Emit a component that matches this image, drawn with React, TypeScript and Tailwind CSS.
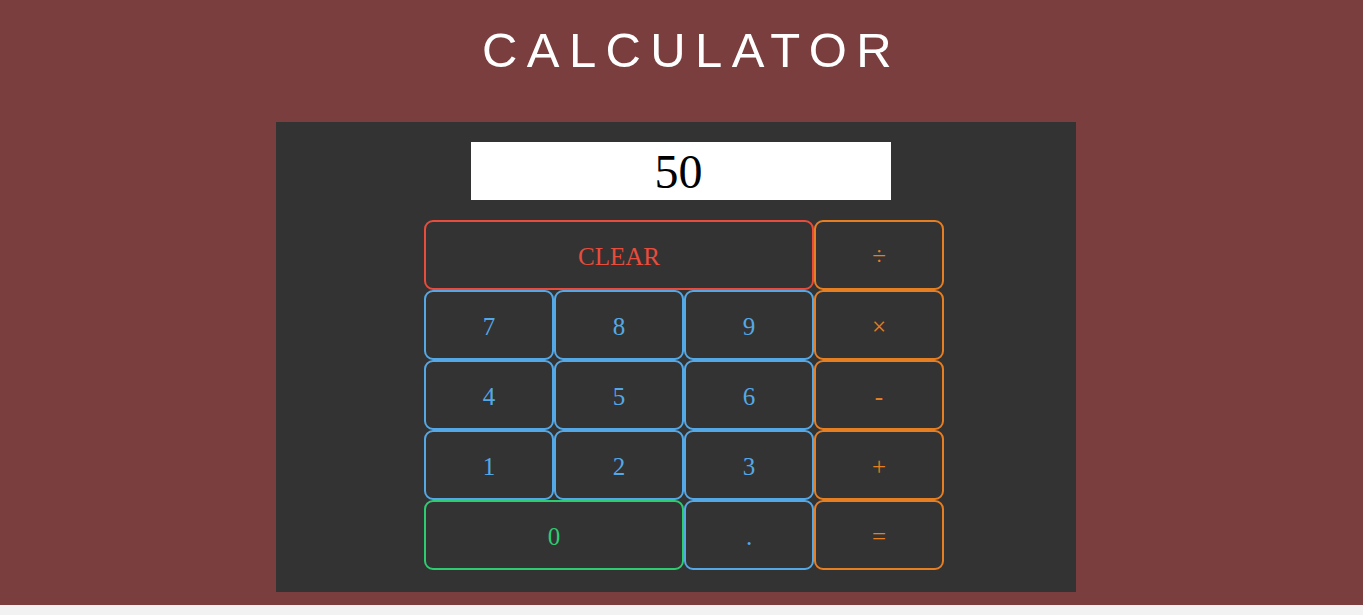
const keys = [
  { label: 'CLEAR', kind: 'clear', span: 'col-span-3' },
  { label: '÷', kind: 'op' },
  { label: '7', kind: 'num' },
  { label: '8', kind: 'num' },
  { label: '9', kind: 'num' },
  { label: '×', kind: 'op' },
  { label: '4', kind: 'num' },
  { label: '5', kind: 'num' },
  { label: '6', kind: 'num' },
  { label: '-', kind: 'op' },
  { label: '1', kind: 'num' },
  { label: '2', kind: 'num' },
  { label: '3', kind: 'num' },
  { label: '+', kind: 'op' },
  { label: '0', kind: 'zero', span: 'col-span-2' },
  { label: '.', kind: 'num' },
  { label: '=', kind: 'op' },
];

const styles: Record<string, string> = {
  clear: 'border-[#e74c3c] text-[#e74c3c]',
  op: 'border-[#e67e22] text-[#e67e22]',
  num: 'border-[#55a8e6] text-[#55a8e6]',
  zero: 'border-[#2ecc71] text-[#2ecc71]',
};

export default function App() {
  return (
    <div className="min-h-[615px] bg-[#f2f2f2]">
      <div className="h-[605px] bg-[#7b3e3e] pr-[11px]">
        <h1 className="pt-[18px] pl-[31px] text-center font-['Liberation_Sans',Arial,sans-serif] text-[49px] leading-[64px] tracking-[9.4px] text-white">
          CALCULATOR
        </h1>
        <div className="mx-auto mt-[40px] h-[470px] w-[800px] bg-[#333333] pt-[20px]">
          <div className="ml-[195px] flex h-[58px] w-[420px] items-center justify-center bg-white pt-[2px] pr-[5px] font-['Liberation_Serif','Times_New_Roman',serif] text-[48px] leading-none text-black">
            50
          </div>
          <div className="ml-[148px] mt-[20px] grid w-[520px] grid-cols-4 auto-rows-[70px] font-['Liberation_Serif','Times_New_Roman',serif]">
            {keys.map((k, i) => (
              <button
                key={i}
                className={`flex items-center justify-center rounded-[9px] border-2 bg-transparent pt-[3px] text-[25px] ${styles[k.kind]} ${k.span ?? ''}`}
              >
                {k.label}
              </button>
            ))}
          </div>
        </div>
      </div>
    </div>
  );
}
